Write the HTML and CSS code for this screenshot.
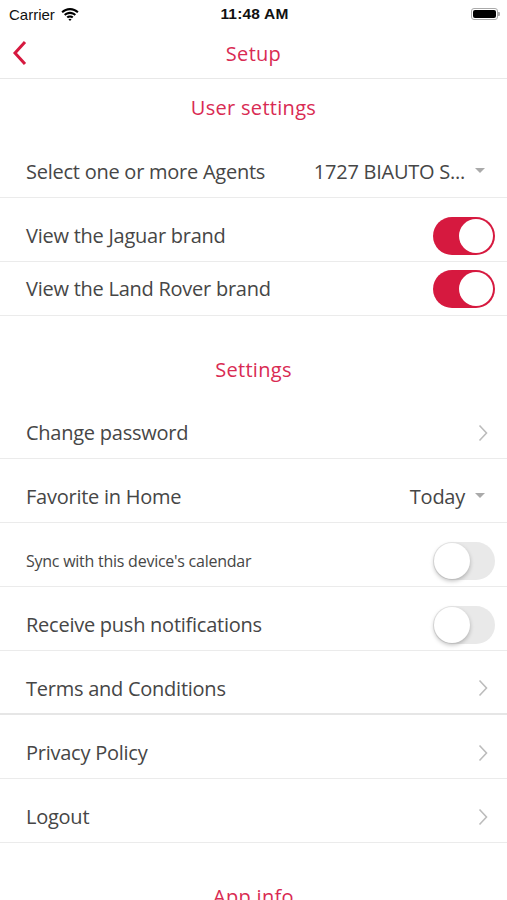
FILE: index.html
```html
<!DOCTYPE html>
<html lang="en">
<head>
    <meta charset="UTF-8">
    <meta name="viewport" content="width=device-width, initial-scale=1.0">
    <title>Setup</title>
    <link rel="stylesheet" href="styles.css">
</head>
<body>
    <div class="statusbar">
        <div class="sb-left">
            <span>Carrier</span>
            <svg class="wifi" width="18" height="13" viewBox="0 0 18 13">
                <path d="M9 2.2c2.8 0 5.3 1.1 7.2 2.9l1.4-1.5C15.3 1.4 12.3 0 9 0S2.7 1.4.4 3.6l1.4 1.5C3.7 3.3 6.2 2.2 9 2.2z" fill="#000"/>
                <path d="M9 5.9c1.8 0 3.4.7 4.6 1.8l1.4-1.5C13.4 4.7 11.3 3.8 9 3.8S4.6 4.7 3 6.2l1.4 1.5C5.6 6.6 7.2 5.9 9 5.9z" fill="#000"/>
                <path d="M9 9.5c.8 0 1.5.3 2 .8L12.5 8.8C11.6 7.9 10.4 7.5 9 7.5s-2.6.4-3.5 1.3L7 10.3c.5-.5 1.2-.8 2-.8zM9 13l1.6-1.7c-.4-.4-1-.6-1.6-.6s-1.2.2-1.6.6z" fill="#000"/>
            </svg>
        </div>
        <div class="sb-time">11:48 AM</div>
        <div class="sb-right">
            <div class="battery"><div class="battery-fill"></div></div>
            <div class="battery-cap"></div>
        </div>
    </div>

    <header class="navbar">
        <svg class="back" width="16" height="26" viewBox="0 0 16 26">
            <path d="M13 2 L3 13 L13 24" fill="none" stroke="#d6193f" stroke-width="3"/>
        </svg>
        <h1 class="nav-title">Setup</h1>
    </header>

    <h2 class="section-title">User settings</h2>

    <div class="row">
        <span class="label">Select one or more Agents</span>
        <span class="value">1727 BIAUTO S...</span>
        <span class="caret"></span>
    </div>
    <div class="row">
        <span class="label">View the Jaguar brand</span>
        <span class="switch on"><span class="knob"></span></span>
    </div>
    <div class="row short">
        <span class="label">View the Land Rover brand</span>
        <span class="switch on"><span class="knob"></span></span>
    </div>

    <h2 class="section-title spaced">Settings</h2>

    <div class="row">
        <span class="label">Change password</span>
        <svg class="chevron" width="10" height="18" viewBox="0 0 10 18"><path d="M1.5 1.5 L8.5 9 L1.5 16.5" fill="none" stroke="#bcbcbc" stroke-width="1.6"/></svg>
    </div>
    <div class="row">
        <span class="label">Favorite in Home</span>
        <span class="value">Today</span>
        <span class="caret"></span>
    </div>
    <div class="row">
        <span class="label small">Sync with this device's calendar</span>
        <span class="switch"><span class="knob"></span></span>
    </div>
    <div class="row">
        <span class="label">Receive push notifications</span>
        <span class="switch"><span class="knob"></span></span>
    </div>
    <div class="row thick">
        <span class="label">Terms and Conditions</span>
        <svg class="chevron" width="10" height="18" viewBox="0 0 10 18"><path d="M1.5 1.5 L8.5 9 L1.5 16.5" fill="none" stroke="#bcbcbc" stroke-width="1.6"/></svg>
    </div>
    <div class="row">
        <span class="label">Privacy Policy</span>
        <svg class="chevron" width="10" height="18" viewBox="0 0 10 18"><path d="M1.5 1.5 L8.5 9 L1.5 16.5" fill="none" stroke="#bcbcbc" stroke-width="1.6"/></svg>
    </div>
    <div class="row">
        <span class="label">Logout</span>
        <svg class="chevron" width="10" height="18" viewBox="0 0 10 18"><path d="M1.5 1.5 L8.5 9 L1.5 16.5" fill="none" stroke="#bcbcbc" stroke-width="1.6"/></svg>
    </div>

    <h2 class="section-title spaced">App info</h2>
</body>
</html>
```

FILE: styles.css
```css
body {
    margin: 0;
    font-family: "Open Sans", "Liberation Sans", sans-serif;
    background: #fff;
    color: #464646;
    overflow: hidden;
}

/* status bar */
.statusbar {
    height: 28px;
    display: flex;
    align-items: center;
    justify-content: space-between;
    padding: 0 7px 0 9px;
    font-family: "Liberation Sans", Arial, sans-serif;
    font-size: 15px;
    color: #111;
}

.sb-left {
    display: flex;
    align-items: center;
    gap: 6px;
    width: 120px;
}

.sb-time {
    font-weight: bold;
    font-size: 15.5px;
    letter-spacing: 0.2px;
}

.sb-right {
    width: 120px;
    display: flex;
    justify-content: flex-end;
    align-items: center;
}

.battery {
    width: 27px;
    height: 12px;
    border: 1px solid #aaa;
    border-radius: 3px;
    padding: 1px;
    box-sizing: border-box;
}

.battery-fill {
    width: 100%;
    height: 100%;
    background: #000;
    border-radius: 2px;
}

.battery-cap {
    width: 2px;
    height: 4px;
    background: #aaa;
    border-radius: 0 1px 1px 0;
}

/* nav */
.navbar {
    height: 50px;
    display: flex;
    align-items: center;
    justify-content: center;
    border-bottom: 1px solid #e8e8e8;
    position: relative;
}

.back {
    position: absolute;
    left: 12px;
    top: 12px;
}

.nav-title {
    margin: 0;
    font-size: 20px;
    font-weight: normal;
    color: #d92b53;
    letter-spacing: 0.3px;
}

.section-title {
    margin: 0;
    height: 55px;
    line-height: 57px;
    text-align: center;
    font-size: 20px;
    font-weight: normal;
    color: #d92b53;
    letter-spacing: 0.3px;
}

.section-title.spaced {
    margin-top: 25px;
    height: 54px;
}

/* rows */
.row {
    height: 64px;
    box-sizing: border-box;
    padding: 12px 12px 0 26px;
    display: flex;
    align-items: center;
    border-bottom: 1px solid #ebebeb;
}

.row.short {
    height: 54px;
    padding-top: 0;
}

.row.thick {
    border-bottom: 2px solid #e6e6e6;
}

.label {
    flex: 1;
    font-size: 20px;
    letter-spacing: -0.25px;
}

.label.small {
    font-size: 16px;
}

.value {
    font-size: 20px;
    letter-spacing: -0.25px;
    margin-right: 10px;
}

.caret {
    width: 0;
    height: 0;
    border-left: 5px solid transparent;
    border-right: 5px solid transparent;
    border-top: 5px solid #aaa;
    margin-right: 10px;
    margin-top: -3px;
}

.chevron {
    margin-right: 7px;
}

/* switches */
.switch {
    width: 62px;
    height: 38px;
    border-radius: 19px;
    background: #e9e9e9;
    position: relative;
    box-sizing: border-box;
}

.switch .knob {
    position: absolute;
    left: 1px;
    top: 1px;
    width: 36px;
    height: 36px;
    border-radius: 50%;
    background: #fff;
    box-shadow: 0 2px 4px rgba(0, 0, 0, 0.25);
}

.switch.on {
    background: #d6193f;
}

.switch.on .knob {
    left: auto;
    right: 2px;
    top: 2px;
    width: 34px;
    height: 34px;
    box-shadow: none;
}
```
